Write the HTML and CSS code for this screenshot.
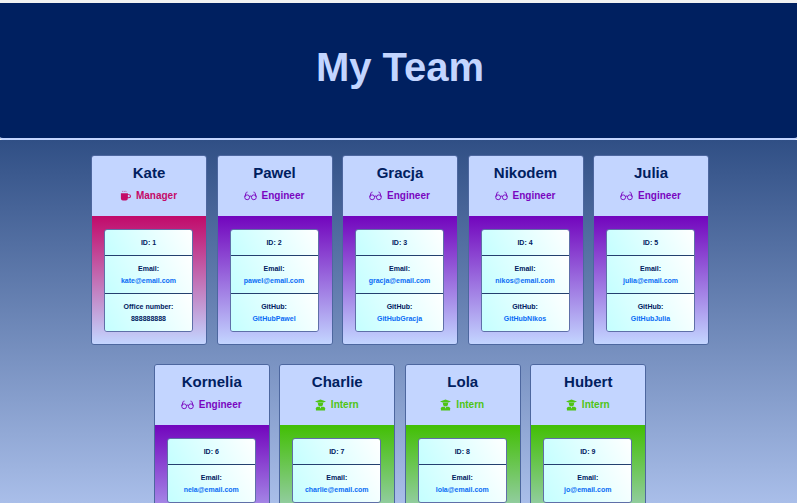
FILE: index.html
```html
<!DOCTYPE html>
<html lang="en">
  <head>
    <meta charset="UTF-8" />
    <meta name="viewport" content="width=device-width, initial-scale=1.0" />
    <title>My Team</title>
    <link rel="stylesheet" href="styles.css">
  </head>
  <body>
    <svg class="defs" width="0" height="0" aria-hidden="true">
      <symbol id="icon-mug" viewBox="0 0 12 12">
        <path d="M2.6 0.4l.5 1.2M4.4 0.4l.5 1.2M6.2 0.4l.5 1.2" fill="none" stroke="currentColor" stroke-width=".6" />
        <path d="M1 3h7.6v1h1.2a2 2 0 0 1 0 4.4H8.5A2.4 2.4 0 0 1 6.4 11H3.2A2.2 2.2 0 0 1 1 8.8zM8.6 5v2.4h1a1.2 1.2 0 0 0 0-2.4z" fill="currentColor" fill-rule="evenodd" />
      </symbol>
      <symbol id="icon-glasses" viewBox="0 0 14 10">
        <g fill="none" stroke="currentColor" stroke-width="1">
          <circle cx="3.4" cy="6.4" r="2.6" />
          <circle cx="10.6" cy="6.4" r="2.6" />
          <path d="M6 6a1 1 0 0 1 2 0M.8 6l1.4-4.4Q2.6.6 3.8.8M13.2 6l-1.4-4.4Q11.4.6 10.2.8" />
        </g>
      </symbol>
      <symbol id="icon-grad" viewBox="0 0 12 12">
        <path d="M6 0L12 2.2 9.2 3.2H2.8L0 2.2z" fill="currentColor" />
        <path d="M3.2 3.6h5.6v1a2.8 2.8 0 0 1-5.6 0z" fill="currentColor" />
        <path d="M1 12V9.6Q1 7.8 3 7.8h6q2 0 2 1.8V12z" fill="currentColor" />
        <path d="M5.2 7.8h1.6L6 10.2z" fill="#c3d5ff" />
      </symbol>
    </svg>

    <header class="banner">
      <h1>My Team</h1>
    </header>

    <main class="team">
      <article class="card manager">
        <div class="card-head">
          <h2>Kate</h2>
          <p class="role"><svg class="icon"><use href="#icon-mug" /></svg>Manager</p>
        </div>
        <div class="card-body">
          <ul class="info">
            <li>ID: 1</li>
            <li>Email:<a href="#">kate@email.com</a></li>
            <li>Office number:<span>888888888</span></li>
          </ul>
        </div>
      </article>

      <article class="card engineer">
        <div class="card-head">
          <h2>Pawel</h2>
          <p class="role"><svg class="icon wide"><use href="#icon-glasses" /></svg>Engineer</p>
        </div>
        <div class="card-body">
          <ul class="info">
            <li>ID: 2</li>
            <li>Email:<a href="#">pawel@email.com</a></li>
            <li>GitHub:<a href="#">GitHubPawel</a></li>
          </ul>
        </div>
      </article>

      <article class="card engineer">
        <div class="card-head">
          <h2>Gracja</h2>
          <p class="role"><svg class="icon wide"><use href="#icon-glasses" /></svg>Engineer</p>
        </div>
        <div class="card-body">
          <ul class="info">
            <li>ID: 3</li>
            <li>Email:<a href="#">gracja@email.com</a></li>
            <li>GitHub:<a href="#">GitHubGracja</a></li>
          </ul>
        </div>
      </article>

      <article class="card engineer">
        <div class="card-head">
          <h2>Nikodem</h2>
          <p class="role"><svg class="icon wide"><use href="#icon-glasses" /></svg>Engineer</p>
        </div>
        <div class="card-body">
          <ul class="info">
            <li>ID: 4</li>
            <li>Email:<a href="#">nikos@email.com</a></li>
            <li>GitHub:<a href="#">GitHubNikos</a></li>
          </ul>
        </div>
      </article>

      <article class="card engineer">
        <div class="card-head">
          <h2>Julia</h2>
          <p class="role"><svg class="icon wide"><use href="#icon-glasses" /></svg>Engineer</p>
        </div>
        <div class="card-body">
          <ul class="info">
            <li>ID: 5</li>
            <li>Email:<a href="#">julia@email.com</a></li>
            <li>GitHub:<a href="#">GitHubJulia</a></li>
          </ul>
        </div>
      </article>

      <article class="card engineer">
        <div class="card-head">
          <h2>Kornelia</h2>
          <p class="role"><svg class="icon wide"><use href="#icon-glasses" /></svg>Engineer</p>
        </div>
        <div class="card-body">
          <ul class="info">
            <li>ID: 6</li>
            <li>Email:<a href="#">nela@email.com</a></li>
          </ul>
        </div>
      </article>

      <article class="card intern">
        <div class="card-head">
          <h2>Charlie</h2>
          <p class="role"><svg class="icon"><use href="#icon-grad" /></svg>Intern</p>
        </div>
        <div class="card-body">
          <ul class="info">
            <li>ID: 7</li>
            <li>Email:<a href="#">charlie@email.com</a></li>
          </ul>
        </div>
      </article>

      <article class="card intern">
        <div class="card-head">
          <h2>Lola</h2>
          <p class="role"><svg class="icon"><use href="#icon-grad" /></svg>Intern</p>
        </div>
        <div class="card-body">
          <ul class="info">
            <li>ID: 8</li>
            <li>Email:<a href="#">lola@email.com</a></li>
          </ul>
        </div>
      </article>

      <article class="card intern">
        <div class="card-head">
          <h2>Hubert</h2>
          <p class="role"><svg class="icon"><use href="#icon-grad" /></svg>Intern</p>
        </div>
        <div class="card-body">
          <ul class="info">
            <li>ID: 9</li>
            <li>Email:<a href="#">jo@email.com</a></li>
          </ul>
        </div>
      </article>
    </main>
  </body>
</html>
```

FILE: styles.css
```css
:root {
  --navy: #002060;
  --pale: #c3d5ff;
}

* {
  box-sizing: border-box;
}
html {
  height: 100%;
  overflow: hidden;
}
body {
  margin: 0;
  height: 100%;
  overflow: hidden;
  padding-top: 3px;
  font-family: "Liberation Sans", Arial, sans-serif;
  color: var(--navy);
  background: #f1f1f1;
}

.defs {
  display: block;
  height: 0;
}

.banner {
  height: 137px;
  display: flex;
  justify-content: center;
  padding: 41px 0 0 3px;
  background: var(--navy);
  border-bottom: 2px solid var(--pale);
  border-radius: 0 0 3px 3px;
}
.banner h1 {
  margin: 0;
  font-size: 40px;
  line-height: 46px;
  font-weight: bold;
  color: var(--pale);
}

.team {
  height: 363px;
  display: flex;
  flex-wrap: wrap;
  justify-content: center;
  align-content: flex-start;
  gap: 19px 9.5px;
  padding: 15px 88px 0 91px;
  overflow: hidden;
  background: linear-gradient(#304f85, #a9bee9);
}

.card {
  width: 116px;
  height: 190px;
  display: flex;
  flex-direction: column;
  border: 1px solid #4d679f;
  border-radius: 3px;
  overflow: hidden;
}
.card-head {
  height: 60px;
  flex: none;
  text-align: center;
  background: var(--pale);
}
.card-head h2 {
  margin: 0;
  padding-top: 8px;
  font-size: 15px;
  line-height: 18px;
  font-weight: bold;
}
.role {
  margin: 7px 1px 0 0;
  display: flex;
  align-items: center;
  justify-content: center;
  gap: 5px;
  font-size: 10px;
  line-height: 14px;
  font-weight: bold;
}
.icon {
  width: 11px;
  height: 12px;
}
.icon.wide {
  width: 13px;
  height: 10px;
}

.card-body {
  flex: 1;
  padding: 13px 13px 0 12px;
}
.manager .role {
  color: #c40a68;
}
.manager .card-body {
  background: linear-gradient(#c10a6a, var(--pale));
}
.engineer .role {
  color: #7a06bf;
}
.engineer .card-body {
  background: linear-gradient(#7205bd, var(--pale));
}
.intern .role {
  color: #4fc414;
}
.intern .card-body {
  background: linear-gradient(#42bf04, var(--pale));
}

.info {
  margin: 0;
  padding: 0;
  list-style: none;
  border: 1px solid #5f6fa8;
  border-radius: 3px;
  overflow: hidden;
  font-size: 7px;
  font-weight: bold;
  text-align: center;
}
.info li {
  display: flex;
  flex-direction: column;
  justify-content: center;
  height: 38px;
  line-height: 11px;
  gap: 1px;
  border-top: 1px solid #24406f;
  background: linear-gradient(60deg, #c4ffff, #ffffff);
}
.info li:first-child {
  height: 25px;
  border-top: 0;
}
.info a {
  color: #0a6cf5;
  text-decoration: none;
}
```
